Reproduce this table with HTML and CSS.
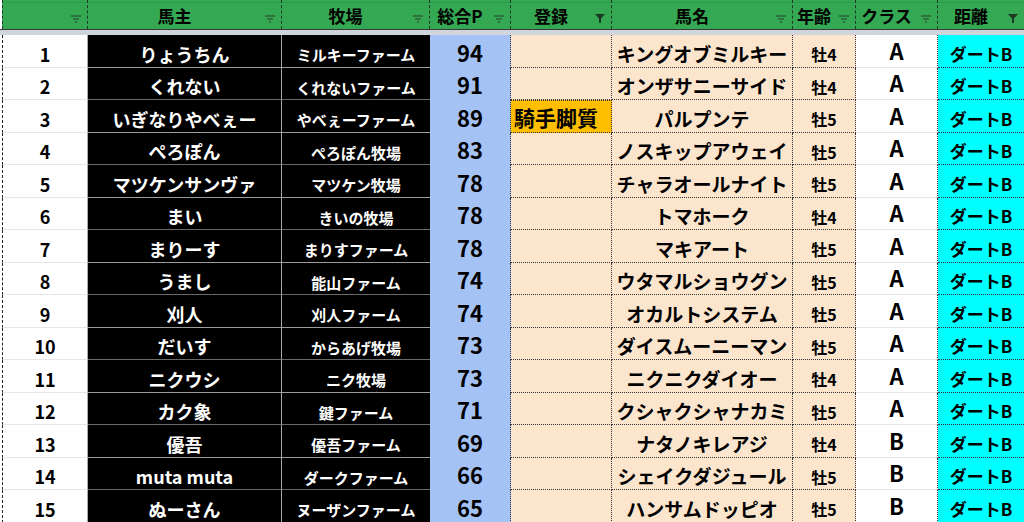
FILE: index.html
```html
<!DOCTYPE html>
<html lang="ja">
<head>
<meta charset="utf-8">
<link rel="stylesheet" href="styles.css">
</head>
<body>
<div class="sheet">
  <div class="h c0"><span class="ht"></span><svg class="fi" viewBox="0 0 10 8"><path d="M0 1h10M2 4h6M4 7h2" /></svg></div>
  <div class="h"><span class="ht">馬主</span><svg class="fi" viewBox="0 0 10 8"><path d="M0 1h10M2 4h6M4 7h2" /></svg></div>
  <div class="h"><span class="ht">牧場</span><svg class="fi" viewBox="0 0 10 8"><path d="M0 1h10M2 4h6M4 7h2" /></svg></div>
  <div class="h"><span class="ht">総合P</span><svg class="fi" viewBox="0 0 10 8"><path d="M0 1h10M2 4h6M4 7h2" /></svg></div>
  <div class="h"><span class="ht">登録</span><svg class="fi on" viewBox="0 0 10 9"><path d="M0 0h10L6 4.5V9H4V4.5Z" /></svg></div>
  <div class="h"><span class="ht">馬名</span><svg class="fi" viewBox="0 0 10 8"><path d="M0 1h10M2 4h6M4 7h2" /></svg></div>
  <div class="h"><span class="ht">年齢</span><svg class="fi" viewBox="0 0 10 8"><path d="M0 1h10M2 4h6M4 7h2" /></svg></div>
  <div class="h"><span class="ht">クラス</span><svg class="fi" viewBox="0 0 10 8"><path d="M0 1h10M2 4h6M4 7h2" /></svg></div>
  <div class="h last"><span class="ht">距離</span><svg class="fi on" viewBox="0 0 10 9"><path d="M0 0h10L6 4.5V9H4V4.5Z" /></svg></div>
  <div class="band"></div>
</div>
<script>
const rows = [
  [1,"りょうちん","ミルキーファーム",94,"","キングオブミルキー","牡4","A"],
  [2,"くれない","くれないファーム",91,"","オンザサニーサイド","牡4","A"],
  [3,"いぎなりやべぇー","やべぇーファーム",89,"騎手脚質","パルプンテ","牡5","A"],
  [4,"ぺろぽん","ぺろぽん牧場",83,"","ノスキップアウェイ","牡5","A"],
  [5,"マツケンサンヴァ","マツケン牧場",78,"","チャラオールナイト","牡5","A"],
  [6,"まい","きいの牧場",78,"","トマホーク","牡4","A"],
  [7,"まりーす","まりすファーム",78,"","マキアート","牡5","A"],
  [8,"うまし","能山ファーム",74,"","ウタマルショウグン","牡5","A"],
  [9,"刈人","刈人ファーム",74,"","オカルトシステム","牡5","A"],
  [10,"だいす","からあげ牧場",73,"","ダイスムーニーマン","牡5","A"],
  [11,"ニクウシ","ニク牧場",73,"","ニクニクダイオー","牡4","A"],
  [12,"カク象","鍵ファーム",71,"","クシャクシャナカミ","牡5","A"],
  [13,"優吾","優吾ファーム",69,"","ナタノキレアジ","牡4","B"],
  [14,"muta muta","ダークファーム",66,"","シェイクダジュール","牡5","B"],
  [15,"ぬーさん","ヌーザンファーム",65,"","ハンサムドッピオ","牡5","B"]
];
const sheet = document.querySelector('.sheet');
const cls = ['no','owner','farm','pt','reg','name','age','cl','dist'];
rows.forEach((r, i) => {
  const vals = [...r, 'ダートB'];
  vals.forEach((v, j) => {
    const d = document.createElement('div');
    d.className = 'c ' + cls[j] + (j === 4 && v ? ' tag' : '') + (i % 2 ? ' odd' : '');
    d.textContent = v;
    sheet.appendChild(d);
  });
});
</script>
</body>
</html>
```
FILE: styles.css
```css
html, body {
  margin: 0;
  padding: 0;
  background: #fff;
}
body {
  font-family: "Noto Sans CJK JP", "Noto Sans", sans-serif;
  font-weight: 700;
  color: #000;
  overflow: hidden;
}
.sheet {
  display: grid;
  grid-template-columns: 88px 194px 148px 81px 101px 181px 63px 82px 86px;
  grid-template-rows: 29px 6px;
  grid-auto-rows: 32.5px;
  width: 1024px;
  height: 522px;
  overflow: hidden;
}
.h {
  background: linear-gradient(#2e9a4a, #2e9a4a) 0 2px / 100% 1px no-repeat, #35a853;
  border-right: 1px dashed #1e3a22;
  display: flex;
  align-items: flex-end;
  padding-bottom: 2px;
  box-sizing: border-box;
  font-size: 17px;
  line-height: 1.3;
}
.h.last { border-right: none; }
.h.c0 { border-left: 1px dashed #1e3a22; margin-left: 2px; }
.ht {
  flex: 1;
  text-align: center;
}
.fi {
  width: 10px;
  height: 8px;
  margin: 0 6px 4px 4px;
  stroke: #2b5f37;
  stroke-width: 1.3;
  fill: none;
}
.fi.on {
  height: 9px;
  stroke: none;
  fill: #1d3a24;
}
.band {
  grid-column: 1 / -1;
  background: #d0d4db;
  border-top: 1px solid #3a3a3a;
}
.c {
  display: flex;
  align-items: flex-end;
  justify-content: center;
  white-space: nowrap;
  box-sizing: border-box;
  padding-bottom: 2px;
  line-height: 1.15;
}
.no {
  background: #fff;
  font-size: 18px;
  border-bottom: 1px solid #e6e6e6;
  border-right: 1px solid #a9a9a9;
  margin-left: 2px;
  border-left: 1px dashed #222;
}
.owner {
  background: #000;
  color: #fff;
  font-size: 18px;
  border-bottom: 1px solid #9c9c9c;
  border-right: 1px solid #a9a9a9;
}
.owner.odd, .farm.odd { border-bottom-color: #6a6a6a; }
.farm {
  background: #000;
  color: #fff;
  font-size: 15px;
  padding-bottom: 3px;
  border-bottom: 1px solid #9c9c9c;
}
.pt {
  background: #a4c2f4;
  font-size: 22px;
  padding-bottom: 5px;
  line-height: 1;
  border-right: 1px dotted #333;
}
.reg {
  background: #fce5cd;
  font-size: 21px;
  line-height: 1.05;
  justify-content: flex-start;
  padding-left: 3px;
  padding-bottom: 3px;
  border-bottom: 1px dotted #333;
  border-right: 1px dotted #333;
}
.reg.tag {
  background: #ffbf00;
  border: 1px dotted #333;
  border-left: none;
}
.name {
  background: #fce5cd;
  font-size: 19px;
  border-bottom: 1px dotted #333;
  border-right: 1px dotted #333;
}
.age {
  background: #fce5cd;
  font-size: 16px;
  padding-bottom: 3px;
  border-bottom: 1px dotted #333;
  border-right: 1px dotted #333;
}
.cl {
  background: #fff;
  font-size: 22px;
  line-height: 1;
  padding-bottom: 6px;
  border-bottom: 1px solid #e6e6e6;
  border-right: 1px dotted #333;
}
.dist {
  background: #00ffff;
  font-size: 17px;
  padding-bottom: 3px;
  border-bottom: 1px dotted #333;
}
```
